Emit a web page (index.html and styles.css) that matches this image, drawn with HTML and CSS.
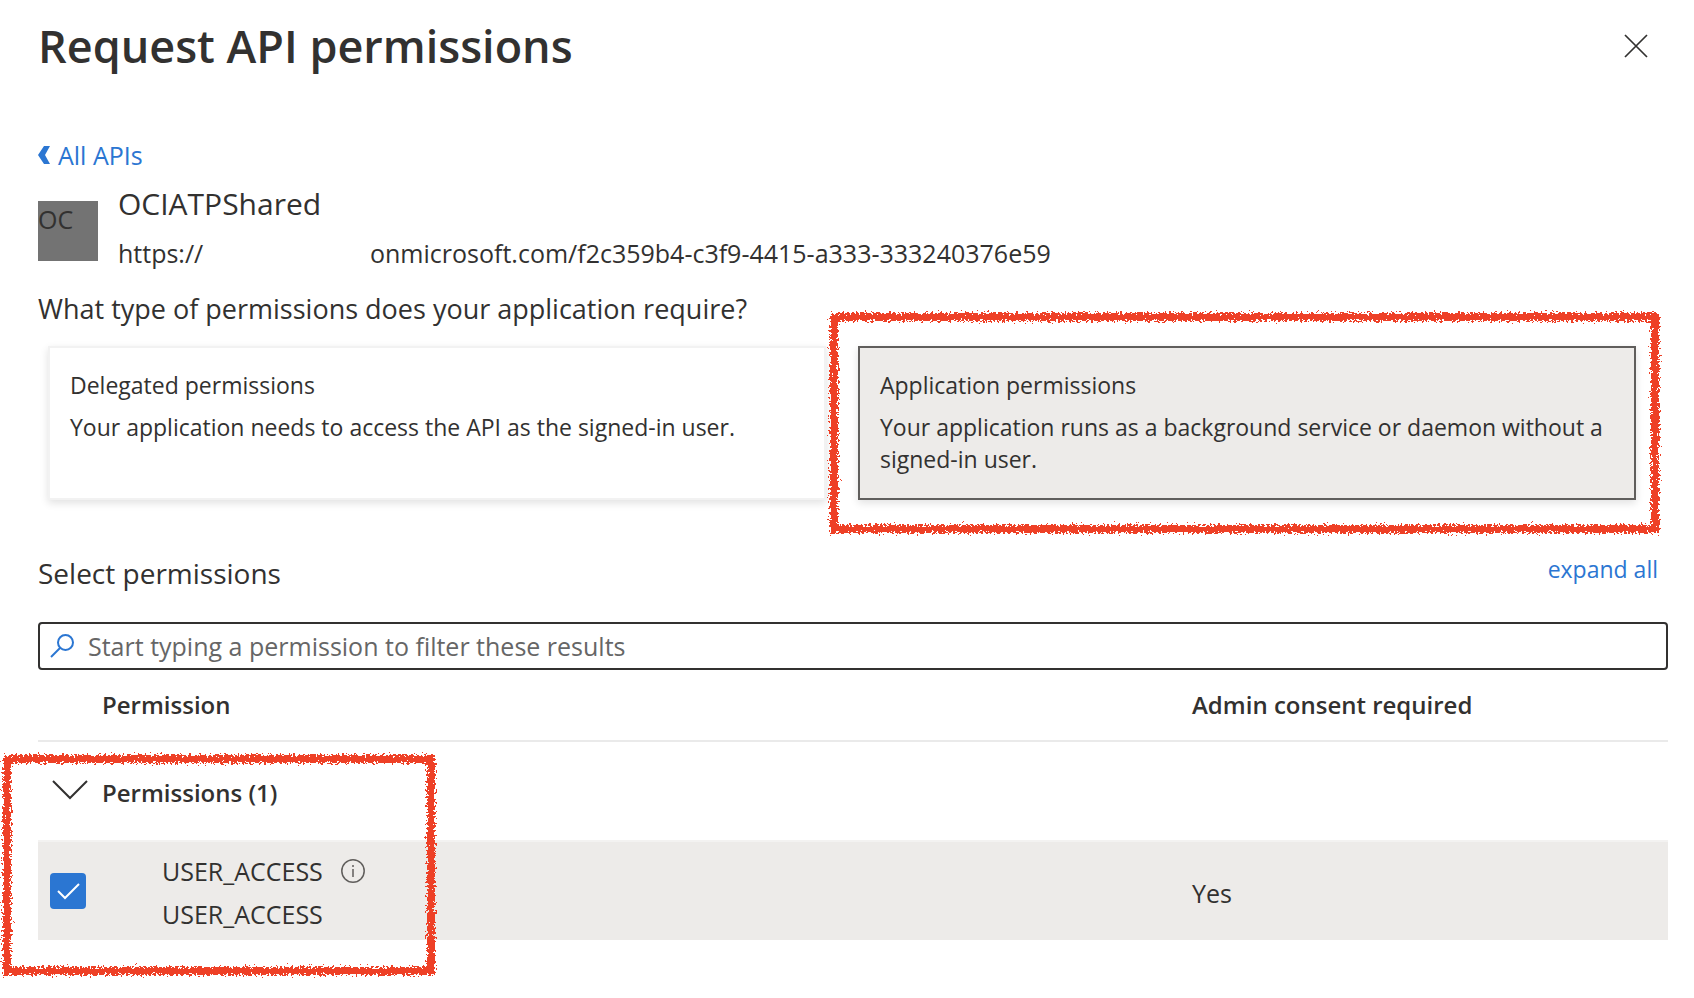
FILE: index.html
```html
<!DOCTYPE html>
<html lang="en">
<head>
    <meta charset="UTF-8">
    <title>Request API permissions</title>
    <link rel="stylesheet" href="styles.css">
</head>
<body>
    <div class="panel">
        <header class="panel-head">
            <h1>Request API permissions</h1>
            <button type="button" class="close" aria-label="Close">
                <svg width="24" height="24" viewBox="0 0 24 24"><path d="M1 1L23 23M23 1L1 23"/></svg>
            </button>
        </header>

        <a class="back" href="#">
            <svg width="12" height="18" viewBox="0 0 12 18"><path d="M6 0H12L7 9L12 18H6L0 9Z"/></svg>
            <span>All APIs</span>
        </a>

        <section class="api">
            <div class="api-logo">OC</div>
            <div class="api-info">
                <h2>OCIATPShared</h2>
                <p class="api-url"><span class="scheme">https://</span><span>onmicrosoft.com/f2c359b4-c3f9-4415-a333-333240376e59</span></p>
            </div>
        </section>

        <p class="question">What type of permissions does your application require?</p>
        <div class="types">
            <button type="button" class="type" aria-pressed="false">
                <span class="type-name">Delegated permissions</span>
                <span>Your application needs to access the API as the signed-in user.</span>
            </button>
            <div class="type-wrap">
                <button type="button" class="type selected" aria-pressed="true">
                    <span class="type-name">Application permissions</span>
                    <span>Your application runs as a background service or daemon without a signed-in user.</span>
                </button>
                <svg class="mark mark-type" aria-hidden="true">
                    <defs>
                        <filter id="crayon" filterUnits="userSpaceOnUse" x="-20" y="-20" width="1600" height="300">
                            <feTurbulence type="fractalNoise" baseFrequency="0.45" numOctaves="2" seed="4" result="noise"/>
                            <feDisplacementMap in="SourceGraphic" in2="noise" scale="10" xChannelSelector="R" yChannelSelector="G"/>
                        </filter>
                    </defs>
                    <rect width="100%" height="100%" filter="url(#crayon)"/>
                </svg>
            </div>
        </div>

        <div class="select-head">
            <h2>Select permissions</h2>
            <a href="#">expand all</a>
        </div>
        <label class="search">
            <svg width="24" height="24" viewBox="0 0 24 24"><circle cx="15.500" cy="8.500" r="7.500"/><path d="M10 14L1 23"/></svg>
            <input type="text" aria-label="Filter permissions" placeholder="Start typing a permission to filter these results">
        </label>

        <div class="list">
            <table>
                <colgroup><col class="col-check"><col><col class="col-consent"></colgroup>
                <thead>
                    <tr>
                        <th></th>
                        <th>Permission</th>
                        <th>Admin consent required</th>
                    </tr>
                </thead>
                <tbody>
                    <tr class="group">
                        <td>
                            <button type="button" class="toggle" aria-label="Collapse Permissions" aria-expanded="true">
                                <svg width="36" height="20" viewBox="0 0 36 20"><path d="M1 1L18 18L35 1"/></svg>
                            </button>
                        </td>
                        <th colspan="2">Permissions (1)</th>
                    </tr>
                    <tr class="item">
                        <td class="pick">
                            <label class="check">
                                <input type="checkbox" aria-label="USER_ACCESS" checked>
                                <svg width="36" height="36" viewBox="0 0 36 36"><path d="M8 18L15 25L29 11"/></svg>
                            </label>
                        </td>
                        <td class="perm">
                            <p>USER_ACCESS
                                <button type="button" class="info" aria-label="Details">
                                    <svg width="24" height="24" viewBox="0 0 24 24"><circle cx="12" cy="12" r="11.200"/><path d="M12 10V18M12 6V8"/></svg>
                                </button>
                            </p>
                            <p>USER_ACCESS</p>
                        </td>
                        <td>Yes</td>
                    </tr>
                </tbody>
            </table>
            <svg class="mark mark-list" aria-hidden="true">
                <rect width="100%" height="100%" filter="url(#crayon)"/>
            </svg>
        </div>
    </div>
</body>
</html>
```

FILE: styles.css
```css
*{margin: 0;padding: 0;box-sizing: border-box;}
body{background: #fff;color: #323130;font: 25px/36px "Open Sans","Noto Sans",sans-serif;}
a{color: #2b76d2;text-decoration: none;}
button{font: inherit;color: inherit;background: none;border: none;text-align: left;cursor: pointer;}
svg{display: block;fill: none;stroke: #323130;stroke-width: 2;}
h2{font-weight: 400;line-height: 40px;}

.panel{padding: 16px 26px 56px 38px;}
.panel-head{display: flex;justify-content: space-between;align-items: center;padding-right: 20px;}
h1{font-size: 45px;line-height: 60px;font-weight: 600;}
.close svg{stroke-width: 1.700;}

.back{display: flex;align-items: center;gap: 8px;margin-top: 61px;width: max-content;}
.back svg{fill: #2b76d2;stroke: none;}

.api{display: flex;gap: 20px;margin-top: 11px;}
.api-logo{width: 60px;height: 60px;margin-top: 17px;background: #737373;}
.api-info h2{font-size: 30px;}
.api-url{display: flex;margin-top: 11px;}
.scheme{width: 252px;}

.question{margin-top: 18px;font-size: 27px;line-height: 40px;}
.types{display: grid;grid-template-columns: 1fr 1fr;gap: 32px;padding: 17px 32px 0 10px;}
.type-wrap{position: relative;}
.type{width: 100%;min-height: 154px;padding: 21px 20px 23px;display: flex;flex-direction: column;gap: 10px;background: #fff;border: 2px solid #f2f2f2;box-shadow: 0 3px 8px rgba(0,0,0,.12);font-size: 23px;line-height: 32px;}
.selected{background: #edebe9;border-color: #605e5c;}

.mark{position: absolute;overflow: visible;pointer-events: none;stroke: #ee4027;stroke-width: 8;}
.mark-type{left: -24px;top: -29px;width: calc(100% + 43px);height: calc(100% + 58px);}
.mark-list{left: -31px;top: 89px;width: 424px;height: 212px;}

.select-head{display: flex;justify-content: space-between;align-items: flex-start;margin-top: 53px;padding-right: 10px;}
.select-head h2{font-size: 28px;}
.select-head a{font-size: 23px;line-height: 32px;}

.search{display: flex;align-items: center;gap: 14px;margin-top: 29px;height: 48px;padding: 0 10px;border: 2px solid #323130;border-radius: 4px;}
.search svg{stroke: #2b76d2;}
.search input{flex: 1;height: 36px;border: none;outline: none;background: none;font: inherit;color: inherit;}
.search input::placeholder{color: #666;opacity: 1;}

.list{position: relative;}
table{width: 100%;table-layout: fixed;border-collapse: separate;border-spacing: 0;}
th{text-align: left;font-size: 24px;font-weight: 600;}
.col-check{width: 64px;}
.col-consent{width: 476px;}
thead th{padding: 17px 0;border-bottom: 2px solid #eaeaea;}
.group td,.group th{padding: 33px 0 29px;}
.toggle{display: block;padding: 5px 0 11px 14px;}
.item td{padding: 11px 0 8px;background: #edebe9;border-top: 2px solid #f3f2f1;}
.item .perm{padding-left: 60px;}
.item .pick{padding-bottom: 12px;}
.perm p{display: flex;align-items: center;}
.perm p+p{margin-top: 7px;}
.info{margin-left: 18px;}
.info svg{stroke: #605e5c;stroke-width: 1.500;}
.check{display: block;position: relative;width: 36px;height: 36px;margin-left: 12px;}
.check input{display: block;width: 36px;height: 36px;appearance: none;background: #2b76d2;border-radius: 4px;}
.check svg{position: absolute;left: 0;top: 0;stroke: #fff;pointer-events: none;}
```
